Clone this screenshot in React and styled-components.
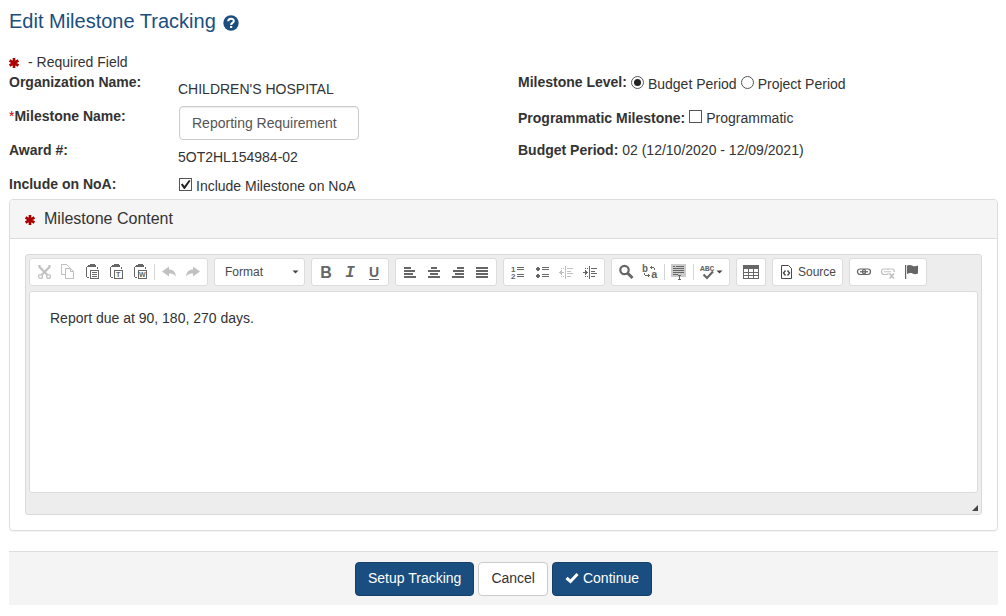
import React from "react";
import styled, { createGlobalStyle, css } from "styled-components";

const GlobalStyle = createGlobalStyle`
  *, *::before, *::after { box-sizing: border-box; }
  body {
    margin: 0;
    background: #fff;
    color: #333;
    font: 14px/20px "Liberation Sans", Arial, sans-serif;
  }
  button, input, select, textarea { font: inherit; color: inherit; margin: 0; }
`;

const Page = styled.main`
  padding: 8px 8px 11px 9px;
`;

const Title = styled.h1`
  display: flex;
  align-items: center;
  gap: 7px;
  margin: 0 0 18px;
  font-size: 20px;
  line-height: 26px;
  font-weight: 400;
  color: #1a4e7e;
`;

const HelpButton = styled.button`
  display: flex;
  padding: 3px 0 0;
  border: 0;
  background: none;
  cursor: pointer;
`;

const RequiredNote = styled.p`
  display: flex;
  align-items: center;
  gap: 9px;
  margin: 0;
`;

const Fields = styled.form`
  display: grid;
  grid-template-columns: minmax(0, 1fr) 480px;
`;

const Column = styled.div`
  display: flex;
  flex-direction: column;
`;

const Row = styled.div`
  display: flex;
  align-items: flex-start;
  height: ${(p) => (p.$last ? 25 : 34)}px;
`;

const nameStyle = css`
  font-weight: 700;
  flex: none;
`;

const FieldName = styled.span`
  ${nameStyle}
  width: ${(p) => (p.$inline ? "auto" : "169px")};
  padding-top: ${(p) => (p.$low ? 2 : 0)}px;
`;

const FieldLabel = styled.label`
  ${nameStyle}
  width: 170px;
`;

const Star = styled.span`
  color: #c00;
  font-weight: 400;
`;

const Value = styled.span`
  padding-top: 7px;
`;

const TextInput = styled.input`
  width: 180px;
  height: 34px;
  padding: 6px 12px;
  border: 1px solid #ccc;
  border-radius: 4px;
  background: #fff;
  color: #555;
  box-shadow: inset 0 1px 1px rgba(0, 0, 0, 0.075);
`;

const Choice = styled.label`
  display: flex;
  align-items: flex-start;
  gap: 4px;
  padding-top: 2px;
  margin-left: ${(p) => p.$indent || 0}px;
`;

const Tick = styled.input`
  appearance: none;
  display: grid;
  flex: none;
  width: 13px;
  height: 13px;
  margin-top: 2px;
  border: 1px solid #555;
  background: #fff;
  border-radius: ${(p) => (p.type === "radio" ? "50%" : "0")};
  &[type="checkbox"]:checked::after {
    content: "";
    background: #222;
    clip-path: polygon(8% 50%, 24% 40%, 40% 64%, 82% 8%, 96% 16%, 44% 92%, 36% 92%);
  }
  &[type="radio"]:checked::after {
    content: "";
    width: 7px;
    height: 7px;
    margin: 2px;
    border-radius: 50%;
    background: #222;
  }
`;

const Panel = styled.section`
  border: 1px solid #ddd;
  border-radius: 4px;
  box-shadow: 0 1px 1px rgba(0, 0, 0, 0.05);
`;

const PanelHeading = styled.h2`
  display: flex;
  align-items: center;
  gap: 9px;
  margin: 0;
  padding: 9px 15px;
  border-bottom: 1px solid #ddd;
  border-radius: 3px 3px 0 0;
  background: #f5f5f5;
  font-size: 16px;
  font-weight: 400;
  line-height: 20px;
`;

const PanelBody = styled.div`
  padding: 15px;
`;

const Editor = styled.div`
  padding: 3px;
  border: 1px solid #d9d9d9;
  border-radius: 3px;
  background: #ededed;
`;

const Toolbar = styled.div`
  display: flex;
  flex-wrap: wrap;
  gap: 6px;
  margin-bottom: 5px;
`;

const Group = styled.div`
  display: flex;
  align-items: center;
  height: 28px;
  padding: 0 2px;
  border: 1px solid #dcdcdc;
  border-radius: 3px;
  background: #fff;
`;

const ToolButton = styled.button`
  display: flex;
  align-items: center;
  justify-content: center;
  gap: ${(p) => (p.$label ? 3 : 0)}px;
  width: ${(p) => p.$width || 24}px;
  height: 24px;
  padding: 0;
  border: 0;
  background: none;
  font-size: 12px;
  color: ${(p) => (p.$label ? "#484848" : "#666")};
  opacity: ${(p) => (p.disabled ? 0.4 : 1)};
`;

const Separator = styled.span`
  width: 1px;
  height: 16px;
  margin: 0 2px;
  background: #d4d4d4;
`;

const LetterMark = styled.span`
  padding-top: 2px;
  font-size: 16px;
  line-height: 20px;
  font-weight: 700;
  font-family: ${(p) =>
    p.$italic ? '"Liberation Mono", monospace' : '"Liberation Sans", sans-serif'};
  font-style: ${(p) => (p.$italic ? "italic" : "normal")};
`;

const UnderMark = styled(LetterMark)`
  padding-top: 1px;
  font-size: 14px;
  line-height: 13px;
  border-bottom: 1px solid #666;
`;

const FormatBox = styled.div`
  display: grid;
  align-items: center;
  width: 85px;
  > * { grid-area: 1 / 1; }
  > svg { justify-self: end; margin-right: 3px; pointer-events: none; }
`;

const FormatSelect = styled.select`
  appearance: none;
  width: 100%;
  height: 24px;
  padding: 0 16px 0 8px;
  border: 0;
  background: none;
  color: #484848;
  font-size: 12px;
`;

const Content = styled.textarea`
  display: block;
  width: 100%;
  height: 202px;
  padding: 16px 20px;
  border: 1px solid #dcdcdc;
  border-radius: 3px;
  background: #fff;
  resize: none;
`;

const EditorFoot = styled.div`
  display: flex;
  justify-content: flex-end;
  align-items: flex-end;
  height: 18px;
`;

const Actions = styled.footer`
  display: flex;
  justify-content: center;
  gap: 4px;
  margin-top: 20px;
  padding: 10px 0 9px;
  border-top: 1px solid #ddd;
  background: #f4f4f4;
`;

const ActionButton = styled.button`
  display: flex;
  align-items: center;
  gap: 4px;
  height: 34px;
  padding: 0 12px 2px;
  border: 1px solid ${(p) => (p.$primary ? "#163f68" : "#ccc")};
  border-radius: 4px;
  background: ${(p) => (p.$primary ? "#1a4e80" : "#fff")};
  color: ${(p) => (p.$primary ? "#fff" : "#333")};
`;

const Svg = ({ children, w = 16, h = 16, smooth }) => (
  <svg
    width={w}
    height={h}
    viewBox={`0 0 ${w} ${h}`}
    fill="none"
    stroke="currentColor"
    shapeRendering={smooth ? "auto" : "crispEdges"}
    aria-hidden="true"
  >
    {children}
  </svg>
);

const Asterisk = () => (
  <svg width="10" height="12" viewBox="0 -2 10 12" stroke="#a00" strokeWidth="2.6" aria-hidden="true">
    <path d="M5 0V10M.6 2.5L9.4 7.5M.6 7.5L9.4 2.5" />
  </svg>
);

const Mark = ({ x, y, size = 8, children, mono }) => (
  <text
    x={x}
    y={y}
    fontSize={size}
    fontWeight="700"
    fill="currentColor"
    stroke="none"
    fontFamily={mono ? "Liberation Mono, monospace" : "Liberation Sans, sans-serif"}
  >
    {children}
  </text>
);

const Clipboard = ({ children }) => (
  <Svg>
    <path d="M4.5 2.5H3.5L2.5 3.5V12.5L3.5 13.5H4.5M13.5 2.5V5" />
    <path d="M6 0H11V1H12V3H4V1H6Z" fill="currentColor" stroke="none" />
    <path d="M6.5 6.5H14.5V14.5H6.5Z" />
    {children}
  </Svg>
);

const Caret = () => (
  <Svg w={7} h={4} smooth>
    <path d="M.5 .5H6.5L3.5 3.5Z" fill="#444" stroke="none" />
  </Svg>
);

const icons = {
  cut: (
    <Svg smooth>
      <path d="M3.5 1V3L11.5 11M13.5 1V3L5.5 11" strokeWidth="2.2" />
      <circle cx="4.5" cy="12.5" r="1.9" strokeWidth="1.3" />
      <circle cx="12.5" cy="12.5" r="1.9" strokeWidth="1.3" />
    </Svg>
  ),
  copy: (
    <Svg>
      <path d="M5 10.5H1.5V.5H6.5L9.5 3.5V5" />
      <path d="M5.5 4.5H10.5L13.5 7.5V14.5H5.5ZM10.5 4.5V7.5H13.5" />
    </Svg>
  ),
  paste: <Clipboard><path d="M8 8.5H13M8 10.5H13M8 12.5H13" /></Clipboard>,
  pasteText: <Clipboard><Mark x={8} y={13} size={7}>T</Mark></Clipboard>,
  pasteWord: <Clipboard><Mark x={7} y={13} size={7}>W</Mark></Clipboard>,
  undo: (
    <Svg smooth>
      <path d="M1 7.5L8 2.5V5.5C12 5.5 14.5 8 15 12.5C13 10 11 9.5 8 9.5V12.5Z" fill="currentColor" stroke="none" />
    </Svg>
  ),
  redo: (
    <Svg smooth>
      <path d="M15 7.5L8 2.5V5.5C4 5.5 1.5 8 1 12.5C3 10 5 9.5 8 9.5V12.5Z" fill="currentColor" stroke="none" />
    </Svg>
  ),
  left: <Svg><path d="M2 4H9M2 7H13M2 10H11M2 13H14" strokeWidth="2" /></Svg>,
  center: <Svg><path d="M5 4H11M2 7H14M4 10H12M2 13H14" strokeWidth="2" /></Svg>,
  right: <Svg><path d="M7 4H14M3 7H14M5 10H14M2 13H14" strokeWidth="2" /></Svg>,
  justify: <Svg><path d="M2 4H14M2 7H14M2 10H14M2 13H14" strokeWidth="2" /></Svg>,
  numbers: (
    <Svg>
      <Mark x={1} y={8} size={8}>1</Mark>
      <Mark x={1} y={15} size={8}>2</Mark>
      <path d="M7 3.5H14M7 5.5H14M7 10.5H14M7 12.5H14" />
    </Svg>
  ),
  bullets: (
    <Svg>
      <path d="M8 3.5H15M8 5.5H15M8 10.5H15M8 12.5H15" />
      <path d="M3 3H5V4H6V6H5V7H3V6H2V4H3ZM3 10H5V11H6V13H5V14H3V13H2V11H3Z" fill="currentColor" stroke="none" />
    </Svg>
  ),
  outdent: (
    <Svg>
      <path d="M7.5 2V15M9 4.5H15M9 7.5H13M9 9.5H15M9 12.5H13M1 8.5H6M2.5 7V10M3.5 6V11" />
      <path d="M3 4.5H7M3 12.5H7" strokeDasharray="1 1" />
    </Svg>
  ),
  indent: (
    <Svg>
      <path d="M7.5 2V15M9 4.5H15M9 7.5H13M9 9.5H15M9 12.5H13M1 8.5H6M4.5 7V10M3.5 6V11" />
      <path d="M3 4.5H7M3 12.5H7" strokeDasharray="1 1" />
    </Svg>
  ),
  find: (
    <Svg smooth>
      <circle cx="6.5" cy="6" r="4.2" strokeWidth="2.2" />
      <path d="M9.5 9L14.5 14" strokeWidth="3" />
    </Svg>
  ),
  replace: (
    <Svg>
      <Mark x={0} y={8} size={10} mono>b</Mark>
      <Mark x={9} y={14} size={11} mono>a</Mark>
      <path d="M8 3.5H12M9.5 2V5M12.5 4V6M2.5 9V11M3 11.5H8M6.5 10V13" />
    </Svg>
  ),
  selectAll: (
    <Svg>
      <path d="M0 0H15V13H0Z" fill="#ccc" stroke="none" />
      <path d="M2 2.5H4M5 2.5H13M2 4.5H13M2 6.5H13M2 8.5H13M2 10.5H7M7 11.5H10M8.5 12V15M7 15.5H10" />
    </Svg>
  ),
  spell: (
    <Svg smooth>
      <Mark x={0} y={7} size={8} mono>ABC</Mark>
      <path d="M3.5 10.5L7 14L13 7.5" strokeWidth="2.2" />
    </Svg>
  ),
  table: (
    <Svg w={18}>
      <path d="M1 1H17V5H1Z" fill="currentColor" stroke="none" />
      <path d="M1.5 2V14.5H16.5V2M1 8.5H17M1 11.5H17M6.5 5V14M11.5 5V14" />
    </Svg>
  ),
  source: (
    <Svg smooth>
      <path d="M2.5 1.5H9.5L12.5 4.5V14.5H2.5Z" />
      <path d="M6.5 6.5L4.5 9L6.5 11.5M8.5 6.5L10.5 9L8.5 11.5" strokeWidth="1.4" />
    </Svg>
  ),
  link: (
    <Svg smooth>
      <rect x="1.5" y="5" width="8" height="5.5" rx="2.7" strokeWidth="1.2" />
      <rect x="6.5" y="5" width="8" height="5.5" rx="2.7" strokeWidth="1.2" />
      <path d="M4 7.75H12" strokeWidth="1.2" />
    </Svg>
  ),
  unlink: (
    <Svg smooth>
      <path d="M8 10.5H4.2A2.7 2.7 0 0 1 4.2 5H11.8A2.7 2.7 0 0 1 14.4 8M4 7.75H11M8 5V6M8 9V10.5" strokeWidth="1.2" />
      <path d="M9.5 9.5L14 14.5M14 9.5L9.5 14.5" strokeWidth="1.8" />
    </Svg>
  ),
  flag: (
    <Svg smooth>
      <path d="M1 1H2.2V15H1Z" fill="currentColor" stroke="none" />
      <path d="M3 1.5C5 .5 7 .8 8.5 1.7C10 2.5 12 2.4 14 1.5V9.5C12 10.4 10 10.4 8.5 9.6C7 8.8 5 9 3 10Z" fill="currentColor" stroke="none" />
    </Svg>
  ),
};

const Tool = ({ name, label, disabled }) => (
  <ToolButton type="button" aria-label={label} title={label} disabled={disabled}>
    {icons[name]}
  </ToolButton>
);

export default function App() {
  return (
    <>
      <GlobalStyle />
      <Page>
        <Title>
          Edit Milestone Tracking
          <HelpButton type="button" aria-label="Help">
            <svg width="16" height="16" viewBox="0 0 16 16" aria-hidden="true">
              <circle cx="8" cy="8" r="7.7" fill="#1a4e7e" />
              <path d="M5.2 6.2C5.2 2.9 10.8 2.9 10.8 6C10.8 8 8.1 7.8 8.1 10" fill="none" stroke="#fff" strokeWidth="2" />
              <path d="M7 11H9.2V13H7Z" fill="#fff" />
            </svg>
          </HelpButton>
        </Title>
        <RequiredNote><Asterisk /> - Required Field</RequiredNote>

        <Fields>
          <Column>
            <Row>
              <FieldName>Organization Name:</FieldName>
              <Value>CHILDREN'S HOSPITAL</Value>
            </Row>
            <Row>
              <FieldLabel htmlFor="milestone-name"><Star>*</Star>Milestone Name:</FieldLabel>
              <TextInput id="milestone-name" type="text" defaultValue="Reporting Requirement" />
            </Row>
            <Row>
              <FieldName>Award #:</FieldName>
              <Value>5OT2HL154984-02</Value>
            </Row>
            <Row $last>
              <FieldName>Include on NoA:</FieldName>
              <Choice $indent={1}>
                <Tick type="checkbox" defaultChecked />
                Include Milestone on NoA
              </Choice>
            </Row>
          </Column>
          <Column>
            <Row>
              <FieldName $inline>Milestone Level:</FieldName>
              <Choice $indent={4}>
                <Tick type="radio" name="level" defaultChecked />
                Budget Period
              </Choice>
              <Choice $indent={4}>
                <Tick type="radio" name="level" />
                Project Period
              </Choice>
            </Row>
            <Row>
              <FieldName $inline $low>Programmatic Milestone:</FieldName>
              <Choice $indent={4}>
                <Tick type="checkbox" />
                Programmatic
              </Choice>
            </Row>
            <Row>
              <FieldName $inline>Budget Period:&nbsp;</FieldName>
              <span>02 (12/10/2020 - 12/09/2021)</span>
            </Row>
          </Column>
        </Fields>

        <Panel>
          <PanelHeading><Asterisk /> Milestone Content</PanelHeading>
          <PanelBody>
            <Editor>
              <Toolbar role="toolbar" aria-label="Editor toolbar">
                <Group>
                  <Tool name="cut" label="Cut" disabled />
                  <Tool name="copy" label="Copy" disabled />
                  <Tool name="paste" label="Paste" />
                  <Tool name="pasteText" label="Paste as plain text" />
                  <Tool name="pasteWord" label="Paste from Word" />
                  <Separator />
                  <Tool name="undo" label="Undo" disabled />
                  <Tool name="redo" label="Redo" disabled />
                </Group>
                <Group>
                  <FormatBox>
                    <FormatSelect aria-label="Paragraph format">
                      <option>Format</option>
                    </FormatSelect>
                    <Caret />
                  </FormatBox>
                </Group>
                <Group>
                  <ToolButton type="button" title="Bold"><LetterMark>B</LetterMark></ToolButton>
                  <ToolButton type="button" title="Italic"><LetterMark $italic>I</LetterMark></ToolButton>
                  <ToolButton type="button" title="Underline"><UnderMark>U</UnderMark></ToolButton>
                </Group>
                <Group>
                  <Tool name="left" label="Align left" />
                  <Tool name="center" label="Center" />
                  <Tool name="right" label="Align right" />
                  <Tool name="justify" label="Justify" />
                </Group>
                <Group>
                  <Tool name="numbers" label="Numbered list" />
                  <Tool name="bullets" label="Bulleted list" />
                  <Tool name="outdent" label="Decrease indent" disabled />
                  <Tool name="indent" label="Increase indent" />
                </Group>
                <Group>
                  <Tool name="find" label="Find" />
                  <Tool name="replace" label="Replace" />
                  <Separator />
                  <Tool name="selectAll" label="Select all" />
                  <Separator />
                  <ToolButton type="button" title="Spell check" $width={31}>
                    {icons.spell}
                    <Caret />
                  </ToolButton>
                </Group>
                <Group><Tool name="table" label="Table" /></Group>
                <Group>
                  <ToolButton type="button" $label $width={65}>{icons.source}Source</ToolButton>
                </Group>
                <Group>
                  <Tool name="link" label="Link" />
                  <Tool name="unlink" label="Unlink" disabled />
                  <Tool name="flag" label="Anchor" />
                </Group>
              </Toolbar>
              <Content aria-label="Milestone Content" defaultValue="Report due at 90, 180, 270 days." />
              <EditorFoot>
                <Svg w={6} h={6} smooth>
                  <path d="M6 0V6H0Z" fill="#444" stroke="none" />
                </Svg>
              </EditorFoot>
            </Editor>
          </PanelBody>
        </Panel>

        <Actions>
          <ActionButton type="button" $primary>Setup Tracking</ActionButton>
          <ActionButton type="button">Cancel</ActionButton>
          <ActionButton type="button" $primary>
            <svg width="14" height="12" viewBox="0 0 14 12" fill="none" stroke="#fff" strokeWidth="3" aria-hidden="true">
              <path d="M1.5 6L5.5 9.5L12.5 2" />
            </svg>
            Continue
          </ActionButton>
        </Actions>
      </Page>
    </>
  );
}
